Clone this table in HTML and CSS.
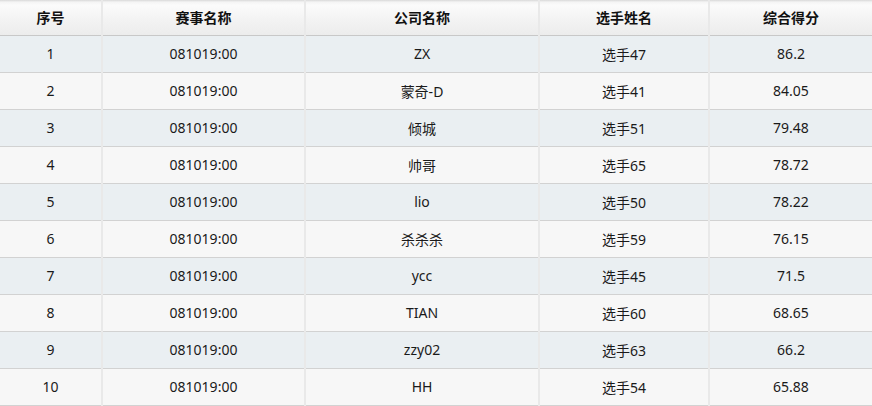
FILE: index.html
```html
<!DOCTYPE html>
<html lang="zh">
<head>
<meta charset="utf-8">
<title>排名</title>
<link rel="stylesheet" href="styles.css">
</head>
<body>
<table class="rank">
  <colgroup>
    <col class="c1"><col class="c2"><col class="c3"><col class="c4"><col class="c5">
  </colgroup>
  <thead>
    <tr><th>序号</th><th>赛事名称</th><th>公司名称</th><th>选手姓名</th><th>综合得分</th></tr>
  </thead>
  <tbody>
    <tr><td>1</td><td>081019:00</td><td>ZX</td><td>选手47</td><td>86.2</td></tr>
    <tr><td>2</td><td>081019:00</td><td>蒙奇-D</td><td>选手41</td><td>84.05</td></tr>
    <tr><td>3</td><td>081019:00</td><td>倾城</td><td>选手51</td><td>79.48</td></tr>
    <tr><td>4</td><td>081019:00</td><td>帅哥</td><td>选手65</td><td>78.72</td></tr>
    <tr><td>5</td><td>081019:00</td><td>lio</td><td>选手50</td><td>78.22</td></tr>
    <tr><td>6</td><td>081019:00</td><td>杀杀杀</td><td>选手59</td><td>76.15</td></tr>
    <tr><td>7</td><td>081019:00</td><td>ycc</td><td>选手45</td><td>71.5</td></tr>
    <tr><td>8</td><td>081019:00</td><td>TIAN</td><td>选手60</td><td>68.65</td></tr>
    <tr><td>9</td><td>081019:00</td><td>zzy02</td><td>选手63</td><td>66.2</td></tr>
    <tr><td>10</td><td>081019:00</td><td>HH</td><td>选手54</td><td>65.88</td></tr>
  </tbody>
</table>
</body>
</html>
```
FILE: styles.css
```css
html, body {
  margin: 0;
  padding: 0;
  background: #ffffff;
}
.rank {
  width: 872px;
  table-layout: fixed;
  border-collapse: collapse;
  font-family: "Noto Sans", "Noto Sans CJK SC", sans-serif;
  font-size: 14px;
  color: #1a1a1a;
}
.c1 { width: 102px; }
.c2 { width: 203px; }
.c3 { width: 234px; }
.c4 { width: 170px; }
.c5 { width: 163px; }
.rank th, .rank td {
  padding: 0 0 1px 0;
  text-align: center;
  vertical-align: middle;
  border-right: 2px solid #e9e9e9;
  white-space: nowrap;
  overflow: hidden;
}
.rank th:last-child, .rank td:last-child {
  border-right: none;
}
.rank th {
  height: 34px;
  font-weight: bold;
  color: #111;
  background: linear-gradient(#d9d9d9 0, #f4f4f4 2px, #fbfbfb 5px, #f3f3f3 20px, #ececec 100%);
  border-bottom: 1px solid #c8c8c8;
}
.rank td {
  height: 35px;
  border-bottom: 1px solid #d2d2d2;
}
.rank tbody tr:nth-child(odd) td {
  background: #eaeff2;
}
.rank tbody tr:nth-child(even) td {
  background: #f7f7f7;
}
```
